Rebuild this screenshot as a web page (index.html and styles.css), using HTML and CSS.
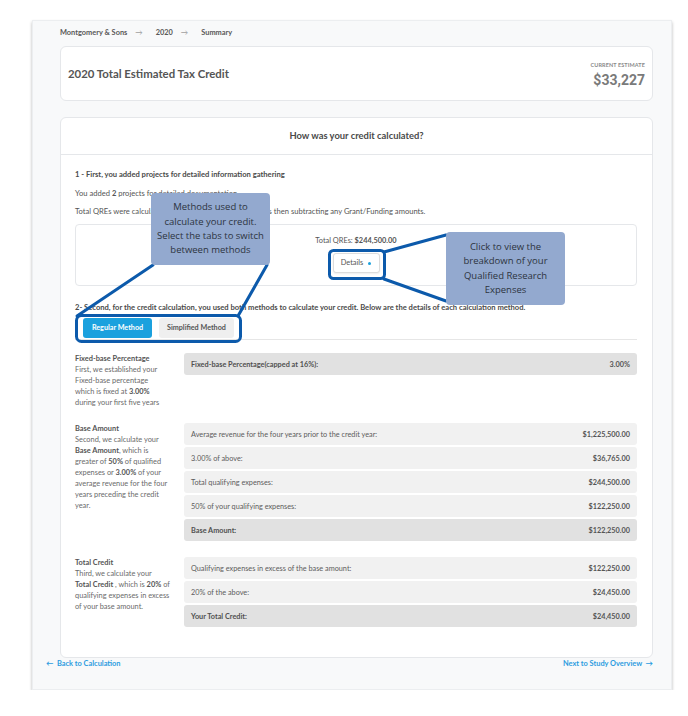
FILE: index.html
```html
<!DOCTYPE html>
<html lang="en">
<head>
    <meta charset="UTF-8">
    <meta name="viewport" content="width=device-width, initial-scale=1.0">
    <title>Credit Summary</title>
    <link rel="stylesheet" href="styles.css">
</head>
<body>

<div class="frame">
    <div class="crumbs">
        <span>Montgomery &amp; Sons</span><span class="arrow">&rarr;</span>
        <span>2020</span><span class="arrow">&rarr;</span>
        <span>Summary</span>
    </div>

    <div class="card summary">
        <h1>2020 Total Estimated Tax Credit</h1>
        <div class="estimate">
            <div class="est-label">Current Estimate</div>
            <div class="est-value">$33,227</div>
        </div>
    </div>

    <div class="card calc">
        <div class="calc-head">How was your credit calculated?</div>
        <div class="calc-body">
            <p class="step">1 - First, you added projects for detailed information gathering</p>
            <p>You added <b>2</b> projects for detailed documentation.</p>
            <p class="last">Total QREs were calculated by adding all qualified expenses then subtracting any Grant/Funding amounts.</p>

            <div class="qre-box">
                <div>Total QREs: <b>$244,500.00</b></div>
                <div class="details">Details <span class="dot"></span></div>
            </div>

            <p class="step second">2- Second, for the credit calculation, you used both methods to calculate your credit. Below are the details of each calculation method.</p>

            <div class="tabs">
                <span class="tab active">Regular Method</span>
                <span class="tab">Simplified Method</span>
            </div>

            <!-- fixed base -->
            <div class="section">
                <div class="explain">
                    <b>Fixed-base Percentage</b><br>
                    First, we established your<br>
                    Fixed-base percentage<br>
                    which is fixed at <b>3.00%</b><br>
                    during your first five years
                </div>
                <div class="rows">
                    <div class="row total"><span>Fixed-base Percentage(capped at 16%):</span><span class="val">3.00%</span></div>
                </div>
            </div>

            <!-- base amount -->
            <div class="section">
                <div class="explain">
                    <b>Base Amount</b><br>
                    Second, we calculate your<br>
                    <b>Base Amount</b>, which is<br>
                    greater of <b>50%</b> of qualified<br>
                    expenses or <b>3.00%</b> of your<br>
                    average revenue for the four<br>
                    years preceding the credit<br>
                    year.
                </div>
                <div class="rows">
                    <div class="row"><span>Average revenue for the four years prior to the credit year:</span><span class="val">$1,225,500.00</span></div>
                    <div class="row"><span>3.00% of above:</span><span class="val">$36,765.00</span></div>
                    <div class="row"><span>Total qualifying expenses:</span><span class="val">$244,500.00</span></div>
                    <div class="row"><span>50% of your qualifying expenses:</span><span class="val">$122,250.00</span></div>
                    <div class="row total"><span>Base Amount:</span><span class="val">$122,250.00</span></div>
                </div>
            </div>

            <!-- total credit -->
            <div class="section">
                <div class="explain">
                    <b>Total Credit</b><br>
                    Third, we calculate your<br>
                    <b>Total Credit</b> , which is <b>20%</b> of<br>
                    qualifying expenses in excess<br>
                    of your base amount.
                </div>
                <div class="rows">
                    <div class="row"><span>Qualifying expenses in excess of the base amount:</span><span class="val">$122,250.00</span></div>
                    <div class="row"><span>20% of the above:</span><span class="val">$24,450.00</span></div>
                    <div class="row total"><span>Your Total Credit:</span><span class="val">$24,450.00</span></div>
                </div>
            </div>
        </div>
    </div>

    <div class="footer-links">
        <a href="#">&larr;&nbsp; Back to Calculation</a>
        <a href="#">Next to Study Overview &nbsp;&rarr;</a>
    </div>
</div>

<!-- walkthrough callouts -->
<svg class="callout-lines" width="688" height="716" viewBox="0 0 688 716">
    <g fill="none" stroke="#0c5aab" stroke-width="3" stroke-linecap="round">
        <rect x="76.5" y="315.5" width="164" height="26" rx="5"/>
        <rect x="329.5" y="250.5" width="55" height="28" rx="4"/>
        <line x1="153" y1="265" x2="77" y2="316"/>
        <line x1="267" y1="265" x2="238" y2="316"/>
        <line x1="384" y1="252" x2="446" y2="235"/>
        <line x1="384" y1="279" x2="446" y2="301"/>
    </g>
</svg>
<div class="tip tip-methods">Methods used to<br>calculate your credit.<br>Select the tabs to switch<br>between methods</div>
<div class="tip tip-details">Click to view the<br>breakdown of your<br>Qualified Research<br>Expenses</div>

</body>
</html>
```

FILE: styles.css
```css
* {box-sizing: border-box;}

body {margin: 0; background: #fff; font-family: "Lato", "Liberation Sans", sans-serif; color: #4d4d4d;}

.frame {margin: 20px 0 0 32px; width: 640px; height: 670px; background: #f8f9fa; border: 1px solid #eceef0; box-shadow: 0 2px 3px rgba(0,0,0,0.28); padding: 7px 18px 0 27px;}

.crumbs {font-size: 7.4px; line-height: 10px; font-weight: 700; color: #585858; display: flex;}
.crumbs .arrow {color: #a0a0a0; margin: 0 13px 0 8px; font-weight: 400;}

.card {background: #fff; border: 1px solid #e5e7ea; border-radius: 6px;}

.summary {margin-top: 8px; height: 55px; display: flex; justify-content: space-between; align-items: center; padding: 0 7px;}
.summary h1 {margin: 0; font-size: 11.4px; font-weight: 700; color: #555;}
.estimate {text-align: right; padding-top: 2px;}
.est-label {font-size: 5.5px; font-weight: 700; color: #8a8a8a; text-transform: uppercase; letter-spacing: 0.1px;}
.est-value {font-family: "Roboto", sans-serif; font-size: 14px; font-weight: 700; color: #7a7a7a; margin-top: 4px;}

.calc {margin-top: 16px;}
.calc-head {height: 37px; line-height: 36px; border-bottom: 1px solid #e5e7ea; text-align: center; font-size: 9.4px; font-weight: 700; color: #4a4a4a;}
.calc-body {padding: 14px 15px 30px 14px;}

.calc-body p {margin: 0 0 8.5px; font-size: 7.6px; line-height: 10px; color: #555;}
.calc-body p.step {font-weight: 700; color: #4a4a4a;}
.calc-body p.last {margin-bottom: 8px;}
.calc-body p.second {margin: 16px 0 6px;}

.qre-box {height: 62px; border: 1px solid #e5e7ea; border-radius: 4px; text-align: center; padding-top: 11px; font-size: 7.4px; line-height: 10px; color: #555;}
.qre-box b {font-weight: 700;}
.details {display: inline-flex; align-items: center; justify-content: center; gap: 5px; width: 47px; height: 20px; margin-top: 7px; border: 1px solid #dcdcdc; border-radius: 3px; background: #fff; box-shadow: 0 1px 2px rgba(0,0,0,0.08);}
.dot {width: 3px; height: 3px; border-radius: 50%; background: #1aa0dc;}

.tabs {display: flex; gap: 7px; padding: 0 0 1px 8px; border-bottom: 1px solid #e6e6e6;}
.tab {height: 20px; line-height: 20px; padding: 0 8px; border-radius: 3px; background: #efefef; font-size: 7.2px; font-weight: 700; color: #555;}
.tab.active {background: #1ba1de; color: #fff; width: 69px; text-align: center;}

.section {display: grid; grid-template-columns: 100px 1fr; gap: 9px; margin-top: 13px;}
.section + .section {margin-top: 15px;}
.section:last-child {margin-top: 16px;}
.explain {font-size: 7.4px; line-height: 11px; color: #6a6a6a;}
.explain b {color: #555;}

.row {height: 22px; margin-bottom: 2px; padding: 0 7px; display: flex; justify-content: space-between; align-items: center; background: #f1f1f1; border-radius: 3px; font-size: 7.3px; color: #5c5c5c;}
.row:last-child {margin-bottom: 0;}
.row .val {font-weight: 700; color: #555;}
.row.total {background: #e1e1e1; font-weight: 700; color: #505050;}

.footer-links {display: flex; justify-content: space-between; margin: 1px 0 0 -14px; font-size: 7.4px; line-height: 10px; font-weight: 700;}
.footer-links a {color: #2c9ce0; text-decoration: none;}

.callout-lines {position: absolute; top: 0; left: 0; pointer-events: none;}

.tip {position: absolute; width: 119px; display: flex; align-items: center; justify-content: center; text-align: center; background: #93a9cf; border-radius: 4px; font-family: "Open Sans", sans-serif; font-size: 9.5px; line-height: 14.4px; color: #2d3440;}
.tip-methods {left: 151px; top: 193px; height: 72px;}
.tip-details {left: 446px; top: 232px; height: 73px;}
```
